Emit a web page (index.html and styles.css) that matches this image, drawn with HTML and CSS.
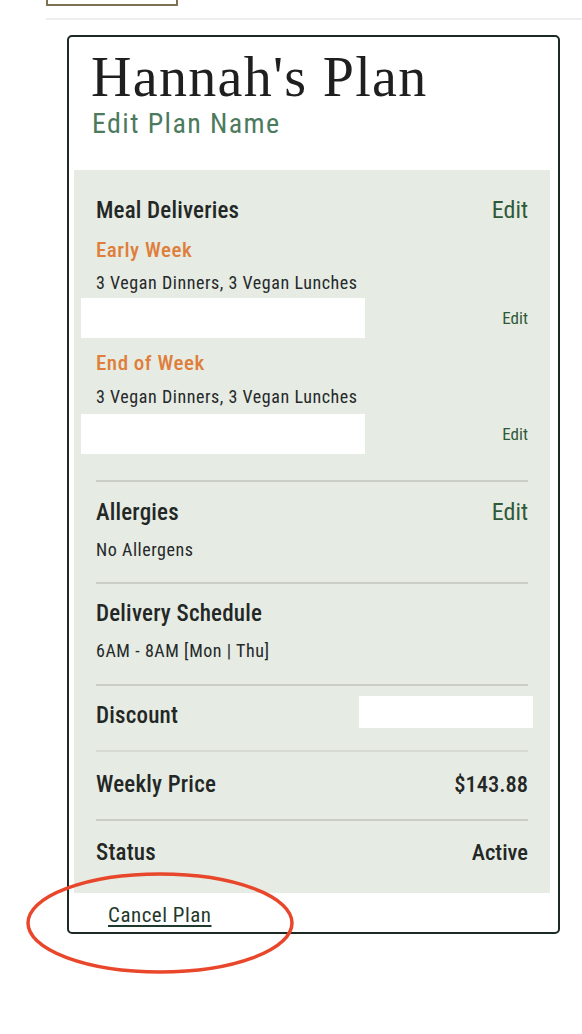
FILE: index.html
```html
<!DOCTYPE html>
<html>
<head>
<meta charset="utf-8">
<link rel="stylesheet" href="styles.css">
</head>
<body>
<div class="page">
  <div class="topbar">
    <div class="topbtn"></div>
  </div>
  <div class="rule"></div>
  <div class="card">
    <h1 class="title">Hannah's Plan</h1>
    <a class="edit-name">Edit Plan Name</a>
    <div class="panel">
      <section class="sec meals">
        <div class="row">
          <span class="label">Meal Deliveries</span>
          <a class="edit">Edit</a>
        </div>
        <div class="sub first">Early Week</div>
        <div class="detail d1">3 Vegan Dinners, 3 Vegan Lunches</div>
        <div class="inline-row r1">
          <div class="blank"></div>
          <a class="edit small">Edit</a>
        </div>
        <div class="sub second">End of Week</div>
        <div class="detail d2">3 Vegan Dinners, 3 Vegan Lunches</div>
        <div class="inline-row r2">
          <div class="blank"></div>
          <a class="edit small">Edit</a>
        </div>
      </section>
      <section class="sec info first-info">
        <div class="row">
          <span class="label">Allergies</span>
          <a class="edit">Edit</a>
        </div>
        <div class="detail">No Allergens</div>
      </section>
      <section class="sec info">
        <div class="row">
          <span class="label">Delivery Schedule</span>
        </div>
        <div class="detail">6AM - 8AM [Mon | Thu]</div>
      </section>
      <section class="sec discount">
        <div class="row center">
          <span class="label low">Discount</span>
          <div class="discount-box"></div>
        </div>
      </section>
      <section class="sec price">
        <div class="row">
          <span class="label">Weekly Price</span>
          <span class="value">$143.88</span>
        </div>
      </section>
      <section class="sec status">
        <div class="row">
          <span class="label">Status</span>
          <span class="value">Active</span>
        </div>
      </section>
    </div>
    <a class="cancel">Cancel Plan</a>
  </div>
  <svg class="annot" width="272" height="106" viewBox="0 0 272 106">
    <ellipse cx="136" cy="53" rx="132" ry="49" fill="none" stroke="#e8472b" stroke-width="3.5"/>
  </svg>
</div>
</body>
</html>
```
FILE: styles.css
```css
html, body {
  margin: 0;
  padding: 0;
  background: #ffffff;
}
body {
  font-family: Roboto, "Liberation Sans", sans-serif;
  font-stretch: 75%;
  color: #1e2220;
}
.page {
  position: relative;
  width: 582px;
  height: 1034px;
  overflow: hidden;
}
.topbar {
  height: 6px;
  padding-left: 46px;
}
.topbtn {
  width: 128px;
  height: 4px;
  border: 2px solid #7d7152;
  border-top: none;
  border-radius: 0 0 1px 1px;
}
.rule {
  margin: 12px 0 0 46px;
  height: 2px;
  background: #eeeeee;
}
.card {
  margin: 15px 0 0 67px;
  width: 493px;
  box-sizing: border-box;
  border: 2px solid #1b2a22;
  border-radius: 5px;
  padding: 0 8px 0 5px;
}
.title {
  margin: 9px 0 0 17px;
  font-family: "Liberation Serif", serif;
  font-stretch: normal;
  font-weight: 400;
  font-size: 56px;
  line-height: 62px;
  letter-spacing: 1.3px;
  color: #1f1f1f;
}
.edit-name {
  display: block;
  margin: 0 0 0 18px;
  font-size: 28px;
  line-height: 32px;
  letter-spacing: 1.4px;
  color: #4c7a5d;
}
.panel {
  margin-top: 30px;
  background: #e6ebe3;
  padding: 28px 22px 0 22px;
}
.sec {
  border-bottom: 2px solid #c9cdc6;
}
.sec.meals { padding-bottom: 26px; }
.sec.info { padding: 18px 0 22px; }
.sec.info.first-info { padding-bottom: 21px; }
.sec.discount { padding: 10px 0 22px; border-bottom-color: #d6dad3; }
.sec.price { padding: 20px 0 22px; }
.sec.status { padding: 19px 0 28px; border-bottom: none; }
.row {
  display: flex;
  justify-content: space-between;
  align-items: baseline;
}
.row.center {
  align-items: center;
}
.label {
  font-size: 23px;
  line-height: 24px;
  font-weight: 500;
  font-stretch: 80%;
  letter-spacing: 0.2px;
  color: #232725;
}
.label.low {
  align-self: flex-end;
}
.value {
  font-size: 22.5px;
  line-height: 24px;
  font-weight: 500;
  font-stretch: 80%;
  letter-spacing: 0;
  color: #232725;
}
.edit {
  font-size: 24px;
  line-height: 24px;
  color: #2f5a37;
}
.edit.small {
  font-size: 17px;
  line-height: 20px;
}
.sub {
  font-size: 21px;
  line-height: 24px;
  font-weight: 500;
  letter-spacing: 0.5px;
  color: #df7e3b;
}
.sub.first { margin-top: 15px; }
.sub.second { margin-top: 13px; }
.detail {
  margin-top: 14px;
  font-size: 18px;
  line-height: 22px;
  letter-spacing: 0.55px;
  color: #25292a;
}
.detail.d1 { margin-top: 10px; }
.detail.d2 { margin-top: 11px; }
.inline-row {
  display: flex;
  justify-content: space-between;
  align-items: center;
  margin-left: -15px;
}
.inline-row.r1 { margin-top: 4px; }
.inline-row.r2 { margin-top: 6px; }
.blank {
  width: 284px;
  height: 40px;
  background: #ffffff;
}
.discount-box {
  width: 174px;
  height: 32px;
  background: #ffffff;
  margin-right: -5px;
}
.cancel {
  display: inline-block;
  margin: 10px 0 5px 34px;
  font-size: 21px;
  line-height: 24px;
  letter-spacing: 0.5px;
  color: #1f3a2c;
  text-decoration: underline;
  text-underline-offset: 3px;
  text-decoration-thickness: 2px;
}
.annot {
  position: absolute;
  left: 24px;
  top: 870px;
}
```
